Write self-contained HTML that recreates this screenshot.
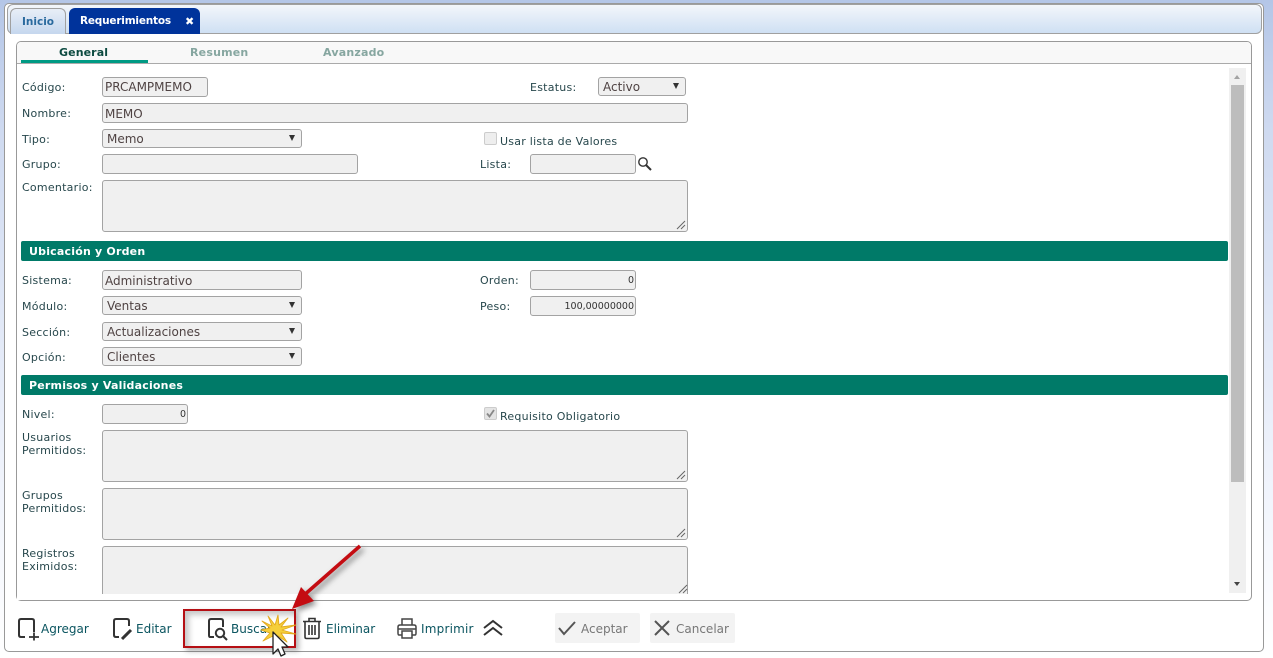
<!DOCTYPE html>
<html><head><meta charset="utf-8">
<style>
*{box-sizing:border-box}
html,body{margin:0;padding:0;width:1273px;height:658px;overflow:hidden;background:linear-gradient(#b4c6e7 0,#cfdaf0 20%,#eef2fb 70%,#fff 100%);font-family:"DejaVu Sans","Liberation Sans",sans-serif;font-size:11px;color:#1d4a50}
.a{position:absolute}
#outer{left:4px;top:3px;width:1260px;height:649px;background:#fff;border:1px solid #999;border-radius:5px}
#bar{left:7px;top:4px;width:1255px;height:30px;border:1px solid #a0a0a0;border-radius:6px;background:linear-gradient(#f3f6fb,#cfe0f3)}
.tab{top:8px;height:26px;border-radius:6px 6px 0 0;font-weight:bold;font-size:10.5px;line-height:27px;text-align:center}
#panel{left:16px;top:41px;width:1236px;height:560px;background:#fff;border:1px solid #999;border-radius:5px}
#strip{left:17px;top:42px;width:1234px;height:22px;background:#f8f8f8;border-bottom:1px solid #aaa;border-radius:4px 4px 0 0}
.st{top:45px;font-weight:bold;font-size:11px;letter-spacing:.2px;line-height:15px;color:#86a6a0}
.l{position:absolute;left:22px;font-size:11px;line-height:13px;letter-spacing:.25px;color:#27474c;white-space:nowrap}
.i{position:absolute;background:#f0f0f0;border:1px solid #a3a3a3;border-radius:3px;font-size:12px;line-height:20px;padding-left:2px;color:#4f4343;white-space:nowrap}
.s{padding-left:4px}
.s:after{content:"";position:absolute;right:6px;top:5px;border-left:3.5px solid transparent;border-right:3.5px solid transparent;border-top:6px solid #333}
.n{text-align:right;padding:0 1px 0 0;font-size:9.5px;color:#333}
.h{position:absolute;left:21px;width:1207px;height:20px;background:#007a68;border-radius:2px;color:#fff;font-weight:bold;font-size:11px;line-height:22px;padding-left:8px;letter-spacing:.2px}
.g{position:absolute;right:1px;bottom:1px}
.b{position:absolute;top:622px;font-size:12px;line-height:15px;color:#0b5560;white-space:nowrap}
.d{position:absolute;top:613px;height:30px;background:#f3f3f3;border-radius:2px;color:#777;font-size:12px;line-height:32px;padding-left:26px}
</style></head><body>
<div class="a" id="outer"></div>
<div class="a" id="bar"></div>
<div class="a tab" style="left:10px;width:56px;background:linear-gradient(#e8eef7,#c5d7ee);border:1px solid #a0a0a0;border-bottom:none;color:#2a6a9e">Inicio</div>
<div class="a tab" style="left:69px;width:131px;background:#00339b;color:#fff;text-align:left;padding-left:11px;letter-spacing:-.2px">Requerimientos<span style="position:absolute;left:116px;top:0;font-size:11px">✖</span></div>
<div class="a" id="panel"></div>
<div class="a" id="strip"></div>
<div class="a st" style="left:59px;color:#0c4a40;letter-spacing:.1px">General</div>
<div class="a" style="left:21px;top:60px;width:127px;height:3px;background:#009a84"></div>
<div class="a st" style="left:190px">Resumen</div>
<div class="a st" style="left:323px">Avanzado</div>

<div class="l" style="top:81px">Código:</div><div class="i" style="left:102px;top:77px;width:106px;height:20px;line-height:19px">PRCAMPMEMO</div>
<div class="l" style="top:107px">Nombre:</div><div class="i" style="left:102px;top:103px;width:586px;height:20px">MEMO</div>
<div class="l" style="top:133px">Tipo:</div><div class="i s" style="left:102px;top:129px;width:200px;height:19px;line-height:19px">Memo</div>
<div class="l" style="top:158px">Grupo:</div><div class="i" style="left:102px;top:154px;width:256px;height:20px"></div>
<div class="l" style="top:181px">Comentario:</div><div class="i" style="left:102px;top:180px;width:586px;height:52px"><svg class="g" width="10" height="10"><path d="M1 9 9 1M5 9 9 5" stroke="#666" fill="none"/></svg></div>

<div class="l" style="left:530px;top:81px">Estatus:</div><div class="i s" style="left:598px;top:77px;width:88px;height:19px;line-height:18px">Activo</div>
<div class="a" style="left:484px;top:132px;width:13px;height:13px;background:#eee;border:1px solid #ccc;border-radius:2px"></div>
<div class="l" style="left:500px;top:135px">Usar lista de Valores</div>
<div class="l" style="left:480px;top:158px">Lista:</div><div class="i" style="left:530px;top:154px;width:106px;height:20px"></div>
<svg class="a" style="left:637px;top:156px" width="16" height="16"><circle cx="6" cy="6" r="4.2" fill="none" stroke="#333" stroke-width="1.4"/><path d="M9 9l5 5" stroke="#333" stroke-width="2"/></svg>

<div class="h" style="top:241px">Ubicación y Orden</div>
<div class="l" style="top:274px">Sistema:</div><div class="i" style="left:102px;top:270px;width:200px;height:20px">Administrativo</div>
<div class="l" style="top:300px">Módulo:</div><div class="i s" style="left:102px;top:296px;width:200px;height:19px;line-height:18px">Ventas</div>
<div class="l" style="top:326px">Sección:</div><div class="i s" style="left:102px;top:322px;width:200px;height:19px;line-height:18px">Actualizaciones</div>
<div class="l" style="top:351px">Opción:</div><div class="i s" style="left:102px;top:347px;width:200px;height:19px;line-height:18px">Clientes</div>
<div class="l" style="left:480px;top:274px">Orden:</div><div class="i n" style="left:530px;top:270px;width:106px;height:20px">0</div>
<div class="l" style="left:480px;top:300px">Peso:</div><div class="i n" style="left:530px;top:296px;width:106px;height:20px">100,00000000</div>

<div class="h" style="top:375px">Permisos y Validaciones</div>
<div class="l" style="top:408px">Nivel:</div><div class="i n" style="left:102px;top:404px;width:86px;height:20px">0</div>
<div class="a" style="left:484px;top:407px;width:13px;height:13px;background:#e4e4e4;border:1px solid #ccc;border-radius:2px"><svg style="display:block" width="11" height="11"><path d="M2 5.5 4.5 8.5 9 2" stroke="#888" stroke-width="1.8" fill="none"/></svg></div>
<div class="l" style="left:500px;top:410px">Requisito Obligatorio</div>
<div class="l" style="top:431px">Usuarios<br>Permitidos:</div><div class="i" style="left:102px;top:430px;width:586px;height:52px"><svg class="g" width="10" height="10"><path d="M1 9 9 1M5 9 9 5" stroke="#666" fill="none"/></svg></div>
<div class="l" style="top:489px">Grupos<br>Permitidos:</div><div class="i" style="left:102px;top:488px;width:586px;height:52px"><svg class="g" width="10" height="10"><path d="M1 9 9 1M5 9 9 5" stroke="#666" fill="none"/></svg></div>
<div class="l" style="top:547px">Registros<br>Eximidos:</div>
<div class="i" style="left:102px;top:546px;width:586px;height:48px;border-bottom:none;border-radius:3px 3px 0 0"></div>
<div class="a" style="left:17px;top:594px;width:1210px;height:6px;background:#fff"></div>
<svg class="a" style="left:678px;top:584px" width="10" height="10"><path d="M1 9 9 1M5 9 9 5" stroke="#666" fill="none"/></svg>

<div class="a" style="left:1229px;top:68px;width:17px;height:525px;background:#f0f0f0"></div>
<div class="a" style="left:1231px;top:85px;width:13px;height:397px;background:#bdbdbd"></div>
<div class="a" style="left:1234px;top:75px;border-left:3.5px solid transparent;border-right:3.5px solid transparent;border-bottom:4px solid #a3a3a3"></div>
<div class="a" style="left:1234px;top:582px;border-left:3.5px solid transparent;border-right:3.5px solid transparent;border-top:4px solid #444"></div>

<svg class="a" style="left:16px;top:616px" width="24" height="26" fill="none" stroke="#333" stroke-width="2"><path d="M9 21H5Q3 21 3 19V5Q3 3 5 3H16Q18 3 18 5V16"/><path d="M13 21h10M18 16.500v8" stroke-width="1.800"/></svg>
<div class="b" style="left:41px">Agregar</div>
<svg class="a" style="left:110px;top:616px" width="24" height="26" fill="none" stroke="#333" stroke-width="2"><path d="M9 21H6Q4 21 4 19V5Q4 3 6 3H17Q19 3 19 5V10"/><path d="M12 23 21 14" stroke-width="3"/></svg>
<div class="b" style="left:136px">Editar</div>

<div class="a" style="left:183px;top:609px;width:113px;height:39px;background:#fff;border:2px solid #b50f14;box-shadow:3px 3px 5px rgba(70,70,70,.4),inset 4px 4px 6px rgba(70,70,70,.3)"></div>
<svg class="a" style="left:206px;top:616px" width="24" height="26" fill="none" stroke="#333" stroke-width="2"><path d="M8 21H4Q3 21 3 19V5Q3 3 5 3H15Q17 3 17 5V11"/><circle cx="14" cy="17" r="4.200"/><path d="M17 20l4 4"/></svg>
<div class="b" style="left:231px">Buscar</div>
<svg class="a" style="left:255px;top:610px" width="45" height="48"><path d="M13 6 20 15 23 5 24 15 33 8 26 17 41 15 27 20 41 24 26 23 32 32 23 26 20 36 18 26 8 31 15 23 6 20 15 18 7 11 17 16Z" fill="#f5cf3a" stroke="#e2a91f" stroke-width=".9" stroke-linejoin="round"/><path d="M18 22V44L23 39 26 46 30 44 27 37H33Z" fill="#fff" stroke="#222" stroke-width="1.300" stroke-linejoin="round"/></svg>

<svg class="a" style="left:301px;top:616px" width="22" height="24" fill="none" stroke="#333" stroke-width="1.600"><path d="M2 5.500H20M8 5V2.500H14V5M4 6V21Q4 22.500 5.500 22.500H16.500Q18 22.500 18 21V6M8 9V19M11 9V19M14 9V19"/></svg>
<div class="b" style="left:326px">Eliminar</div>
<svg class="a" style="left:396px;top:617px" width="22" height="23" fill="none" stroke="#444" stroke-width="1.500"><path d="M6 8V2H16V8M6 18H3Q2 18 2 16V10Q2 8 4 8H18Q20 8 20 10V16Q20 18 19 18H16M6 14H16V21H6ZM2 12H20"/></svg>
<div class="b" style="left:421px;letter-spacing:.2px">Imprimir</div>
<svg class="a" style="left:482px;top:619px" width="22" height="18" fill="none" stroke="#333" stroke-width="2"><path d="M2 9 11 2 20 9M2 16 11 9 20 16"/></svg>

<div class="d" style="left:555px;width:85px">Aceptar</div>
<svg class="a" style="left:557px;top:619px" width="20" height="18" fill="none" stroke="#555" stroke-width="2"><path d="M2 9 7 15 18 3"/></svg>
<div class="d" style="left:650px;width:85px">Cancelar</div>
<svg class="a" style="left:653px;top:619px" width="18" height="18" fill="none" stroke="#555" stroke-width="2"><path d="M2 2 16 16M16 2 2 16"/></svg>

<svg class="a" style="left:285px;top:540px;filter:drop-shadow(3px 3px 3px rgba(40,40,40,.55))" width="90" height="75"><path d="M75 6 18 56" stroke="#c40c12" stroke-width="3.500"/><path d="M7 69 16 47 29 61Z" fill="#c40c12"/></svg>
</body></html>
